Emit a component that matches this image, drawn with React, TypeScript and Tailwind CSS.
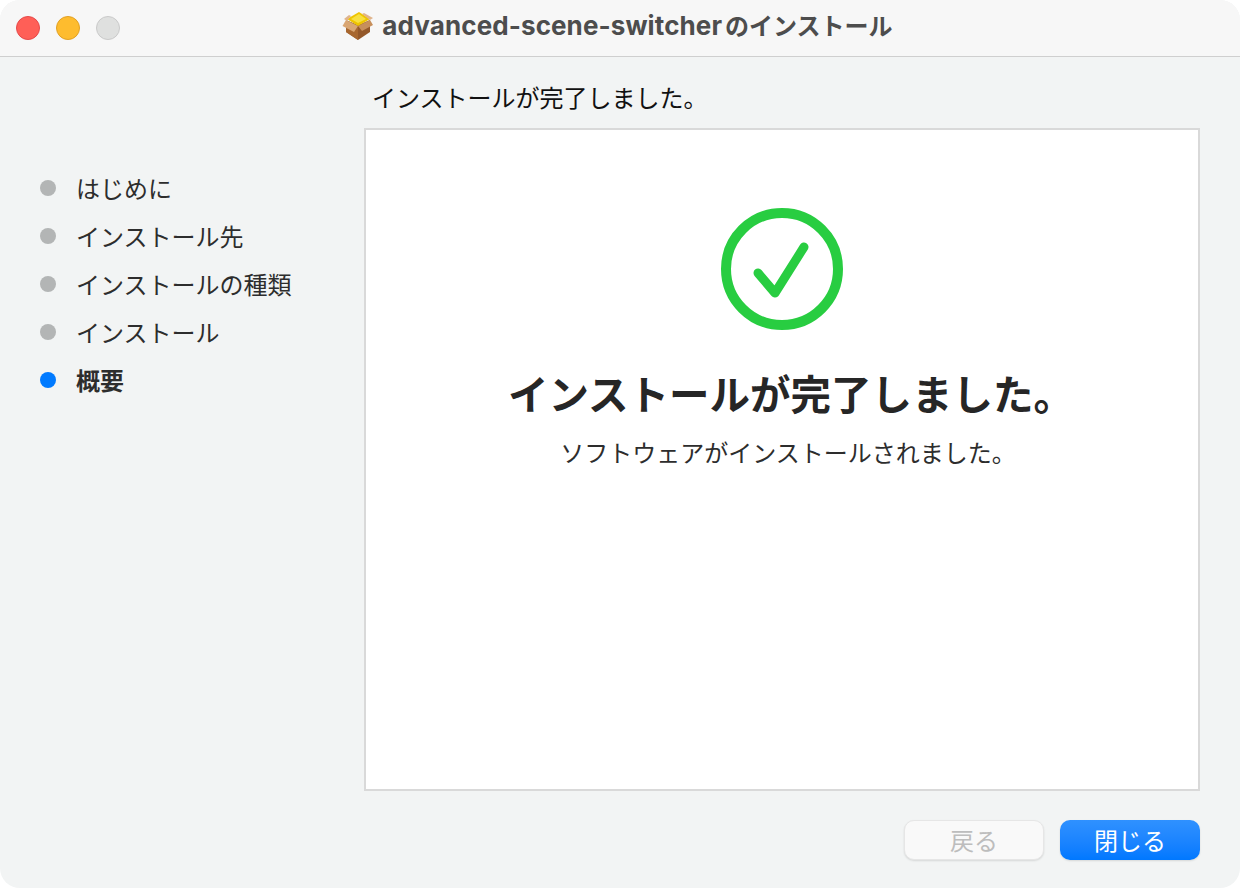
const font = { fontFamily: '"Noto Sans CJK JP", "Noto Sans", sans-serif' };

const steps = ["はじめに", "インストール先", "インストールの種類", "インストール", "概要"];

function PackageIcon() {
  return (
    <svg width="32" height="30" viewBox="0 0 32 30">
      <path d="M16 14 L28 9 L28 21 L16 29 L4 21 L4 9 Z" fill="#94582a" />
      <path d="M16 16 L16 29 L4 21 L4 11 Z" fill="#a8672f" />
      <path d="M4 9 L0.5 15 L12 21 L16 15 Z" fill="#d9a673" />
      <path d="M28 9 L31 14 L20 20 L16 15 Z" fill="#c78f5c" />
      <path d="M5 8 L17 1 L28 8 L16 15 Z" fill="#eec400" />
      <path d="M9 8 L17 3 L24 8 L16 12 Z" fill="#f8e040" />
      <path d="M2 8 L7 4 L9 5 L5 10 Z" fill="#e0b48c" />
      <path d="M22 2 L31 7 L28 9 L20 3 Z" fill="#e0b48c" />
    </svg>
  );
}

function CheckIcon() {
  return (
    <svg width="122" height="122" viewBox="0 0 122 122" fill="none">
      <circle cx="61" cy="61" r="56" stroke="#28cd41" strokeWidth="10" />
      <path d="M37 65 L54 85 L83 39" stroke="#28cd41" strokeWidth="9" strokeLinecap="round" strokeLinejoin="round" />
    </svg>
  );
}

export default function App() {
  return (
    <div className="w-[1240px] h-[888px] bg-white" style={font}>
      <div className="h-full rounded-[20px] overflow-hidden bg-[#f2f4f4] flex flex-col">
        <div className="h-[57px] shrink-0 bg-[#f7f7f7] border-b border-[#cfcfcf] flex items-center relative">
          <div className="flex gap-[16px] pl-[16px]">
            <div className="w-6 h-6 rounded-full bg-[#ff5f57] border border-[#e5494a]" />
            <div className="w-6 h-6 rounded-full bg-[#febc2e] border border-[#e1a024]" />
            <div className="w-6 h-6 rounded-full bg-[#dfe0df] border border-[#c9c9c9]" />
          </div>
          <div className="absolute inset-0 flex items-center justify-center gap-[8px] pr-[5px] pb-[4px]">
            <PackageIcon />
            <span className="text-[24px] font-bold text-[#4d4d4d] leading-none whitespace-nowrap">
              <span className="text-[26px] font-['Inter'] tracking-[0.1px] mr-[3px]">advanced-scene-switcher</span>
              のインストール
            </span>
          </div>
        </div>

        <div className="flex-1 flex pl-[40px] pr-[40px]">
          <div className="w-[324px] shrink-0 pt-[107px]">
            {steps.map((step, i) => (
              <div key={step} className="h-[48px] flex items-center gap-[20px]">
                <div className={`w-4 h-4 rounded-full ${i === 4 ? "bg-[#007aff]" : "bg-[#b3b5b5]"}`} />
                <span className={`text-[24px] leading-none text-[#2d2d2d] ${i === 4 ? "font-bold" : ""}`}>{step}</span>
              </div>
            ))}
          </div>

          <div className="flex-1 flex flex-col">
            <div className="h-[71px] pl-[8px] pt-[24px] text-[24px] leading-[32px] text-[#111111]">インストールが完了しました。</div>
            <div className="h-[663px] bg-white border-2 border-[#d9d9d9] flex flex-col items-center pt-[78px]">
              <CheckIcon />
              <div className="mt-[35px] ml-[18px] text-[40.5px] leading-[56px] font-bold text-[#262626]">インストールが完了しました。</div>
              <div className="mt-[15px] ml-[12px] text-[24px] leading-[32px] text-[#2d2d2d]">ソフトウェアがインストールされました。</div>
            </div>
            <div className="flex justify-end gap-[16px] pt-[29px]">
              <button className="w-[140px] h-[40px] rounded-[10px] bg-[#f9f9f9] border border-[#e6e6e6] shadow-[0_1px_2px_rgba(0,0,0,0.12)] text-[24px] leading-none text-[#bdbdbd]">戻る</button>
              <button className="w-[140px] h-[40px] rounded-[10px] bg-gradient-to-b from-[#2f91ff] to-[#0078ff] shadow-[0_1px_2px_rgba(0,0,0,0.12)] text-[24px] leading-none text-white">閉じる</button>
            </div>
          </div>
        </div>
      </div>
    </div>
  );
}
